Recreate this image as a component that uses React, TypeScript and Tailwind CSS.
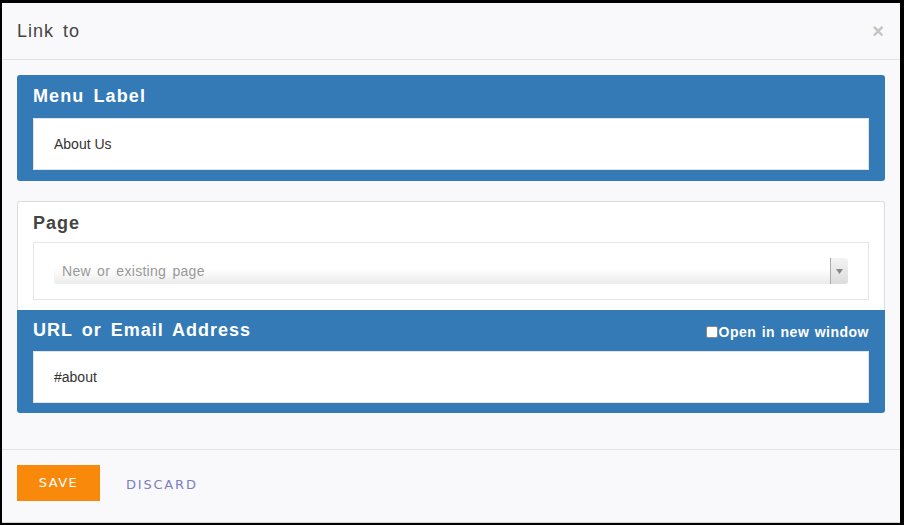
import React from 'react';

const sans = "font-['Liberation_Sans',Arial,sans-serif]";
const deja = "font-['DejaVu_Sans',sans-serif]";

function TextBox({ value }: { value: string }) {
  return (
    <div className="flex h-[52px] items-center border border-[#e3e3e3] bg-white px-[20px] text-[14px] text-[#333]">
      {value}
    </div>
  );
}

export default function App() {
  return (
    <div className={`h-[525px] w-[904px] bg-black pb-[2px] pl-[2px] pr-[4px] pt-[3px] ${sans}`}>
      <div className="flex h-[520px] flex-col border-b border-[#d4d4d4] bg-[#f9f9fb]">
        {/* header */}
        <div className="flex h-[57px] shrink-0 items-center justify-between border-b border-[#e3e3e6] pl-[15px] pr-[16px]">
          <span className="text-[18px] tracking-[1px] [word-spacing:3px] text-[#444]">Link to</span>
          <span className="text-[20px] font-bold leading-none text-[#c4c4c4]">×</span>
        </div>

        {/* body */}
        <div className="shrink-0 px-[15px] pb-[36px] pt-[15px]">
          <div className="rounded-[3px] bg-[#337ab7] px-[16px] pb-[11px] pt-[10px]">
            <div className="mb-[11px] h-[22px] text-[18px] font-bold leading-[22px] tracking-[1.1px] [word-spacing:3px] text-white">
              Menu Label
            </div>
            <TextBox value="About Us" />
          </div>

          <div className="mt-[20px]">
            <div className="rounded-t-[3px] border-x border-t border-[#dcdcdc] bg-white px-[15px] pb-[10px] pt-[10px]">
              <div className="mb-[8px] h-[22px] text-[18px] font-bold leading-[22px] tracking-[1px] text-[#444]">
                Page
              </div>
              <div className="border border-[#e6e6e6] bg-white px-[20px] py-[15px]">
                <div className="flex h-[26px] items-center rounded-[3px] bg-[linear-gradient(#fff_40%,#ebebeb_100%)]">
                  <span className="flex-1 pl-[8px] text-[14px] tracking-[0.3px] [word-spacing:2px] text-[#999]">
                    New or existing page
                  </span>
                  <span className="flex h-full w-[18px] items-center justify-center rounded-r-[3px] border-l border-[#aaa] bg-[linear-gradient(#f4f4f4,#dcdcdc)]">
                    <svg width="7" height="5" viewBox="0 0 7 5">
                      <path d="M0 0h7L3.5 5z" fill="#888" />
                    </svg>
                  </span>
                </div>
              </div>
            </div>
            <div className="rounded-b-[3px] bg-[#337ab7] px-[16px] pb-[10px] pt-[9px]">
              <div className="mb-[10px] flex h-[22px] items-end justify-between">
                <span className="text-[18px] font-bold leading-[22px] tracking-[1px] [word-spacing:3px] text-white">
                  URL or Email Address
                </span>
                <span className="flex items-center pb-[1px] text-[14px] font-bold leading-[16px] tracking-[0.5px] [word-spacing:1px] text-white">
                  <span className="mr-[1px] h-[12px] w-[12px] rounded-[2px] border border-[#8a8a8a] bg-white" />
                  Open in new window
                </span>
              </div>
              <TextBox value="#about" />
            </div>
          </div>
        </div>

        {/* footer */}
        <div className="flex flex-1 items-start border-t border-[#e3e3e6] px-[15px] pt-[15px]">
          <button
            className={`flex h-[36px] w-[83px] items-center justify-center bg-[#f8890a] text-[13px] tracking-[1.5px] text-white ${deja}`}
          >
            SAVE
          </button>
          <button className={`ml-[26px] mt-[12px] text-[13px] leading-[16px] tracking-[1.8px] text-[#7b7fc2] ${deja}`}>
            DISCARD
          </button>
        </div>
      </div>
    </div>
  );
}
